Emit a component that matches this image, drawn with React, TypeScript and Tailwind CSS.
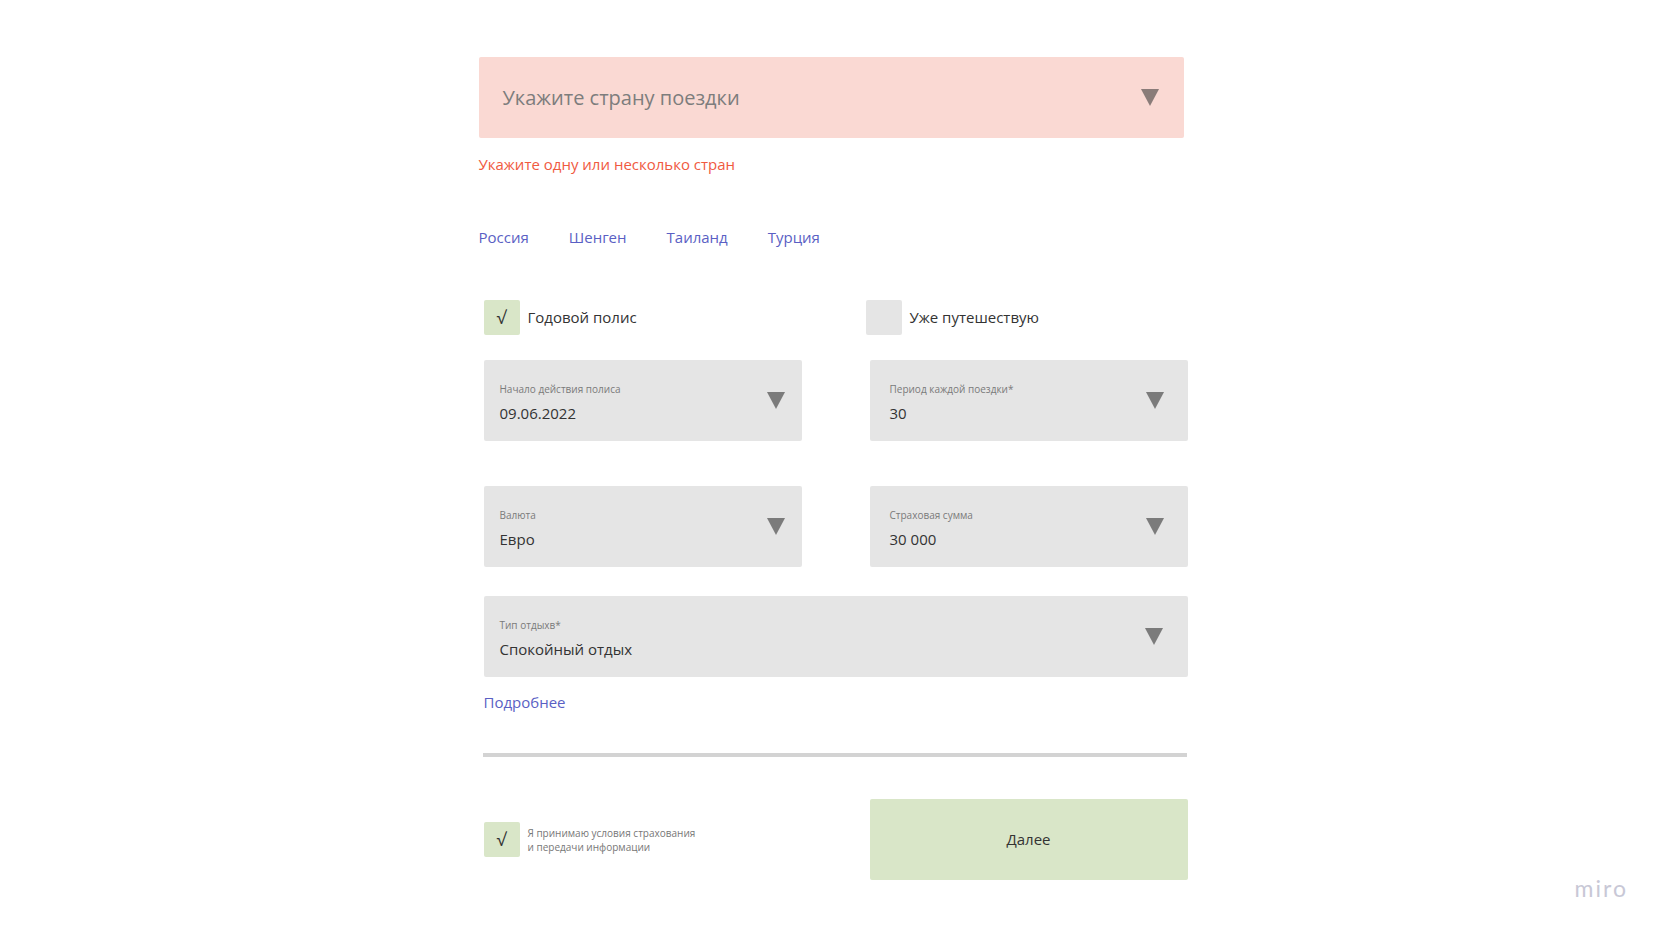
const Triangle = ({ color = "#7b7b7b" }: { color?: string }) => (
  <svg width="18" height="17" viewBox="0 0 18 17">
    <polygon points="0,0 18,0 9,17" fill={color} />
  </svg>
);

const Field = ({
  label,
  value,
  wide,
  right,
}: {
  label: string;
  value: string;
  wide?: boolean;
  right?: boolean;
}) => (
  <div
    className={`flex items-center justify-between h-[81px] bg-[#e5e5e5] rounded-[2px] ${
      wide ? "w-[704px] pl-4 pr-[25px]" : right ? "w-[318px] pl-[20px] pr-[24px]" : "w-[318px] pl-4 pr-[17px]"
    }`}
  >
    <div className="flex flex-col pt-[5px]">
      <span className="text-[10px] leading-[14px] text-[#7a7a7a]">{label}</span>
      <span className="text-[15px] leading-[22px] text-[#333] mt-[6px]">{value}</span>
    </div>
    <Triangle />
  </div>
);

export default function App() {
  const countries = ["Россия", "Шенген", "Таиланд", "Турция"];

  return (
    <div className="relative min-h-[937px] bg-white font-['Open_Sans',sans-serif]">
      <div className="mx-auto w-[709px] pt-[57px]">
        {/* страна */}
        <div className="flex items-center justify-between w-[705px] h-[81px] bg-[#fad9d3] rounded-[2px] pl-6 pr-[25px]">
          <span className="text-[20px] text-[#7d7d7d]">Укажите страну поездки</span>
          <Triangle color="#8a7c79" />
        </div>
        <p className="mt-[15px] text-[15px] leading-[22px] text-[#f05a3f]">
          Укажите одну или несколько стран
        </p>

        <div className="flex gap-[40px] mt-[51px] text-[15px] leading-[22px] text-[#5a5fc4]">
          {countries.map((c) => (
            <span key={c}>{c}</span>
          ))}
        </div>

        <div className="ml-[5px]">
          {/* чекбоксы */}
          <div className="flex mt-[52px] h-[35px]">
            <div className="flex items-center w-[382px]">
              <div className="w-[36px] h-[35px] bg-[#d9e6c8] rounded-[2px] flex items-center justify-center text-[18px] text-[#333]">
                √
              </div>
              <span className="ml-[8px] text-[15px] text-[#333]">Годовой полис</span>
            </div>
            <div className="flex items-center">
              <div className="w-[36px] h-[35px] bg-[#e5e5e5] rounded-[2px]" />
              <span className="ml-[8px] text-[15px] text-[#333]">Уже путешествую</span>
            </div>
          </div>

          {/* поля */}
          <div className="flex gap-[68px] mt-[25px]">
            <Field label="Начало действия полиса" value="09.06.2022" />
            <Field label="Период каждой поездки*" value="30" right />
          </div>
          <div className="flex gap-[68px] mt-[45px]">
            <Field label="Валюта" value="Евро" />
            <Field label="Страховая сумма" value="30 000" right />
          </div>
          <div className="mt-[29px]">
            <Field label="Тип отдыхв*" value="Спокойный отдых" wide />
          </div>

          <p className="mt-[14px] text-[15px] leading-[22px] text-[#5a5fc4]">Подробнее</p>

          <div className="mt-[40px] -ml-[1px] w-[704px] h-[4px] bg-[#d3d3d3]" />

          {/* низ */}
          <div className="flex items-center mt-[42px]">
            <div className="flex items-center w-[386px]">
              <div className="w-[36px] h-[35px] bg-[#d9e6c8] rounded-[2px] flex items-center justify-center text-[18px] text-[#333]">
                √
              </div>
              <div className="ml-[8px] text-[10px] leading-[14px] text-[#777]">
                <p>Я принимаю условия страхования</p>
                <p>и передачи информации</p>
              </div>
            </div>
            <button className="w-[318px] h-[81px] bg-[#d9e6c8] rounded-[2px] text-[15px] text-[#333]">
              Далее
            </button>
          </div>
        </div>
      </div>

      {/* miro watermark */}
      <span className="absolute right-[38px] top-[871px] text-[23px] tracking-[2px] text-[#c8c8d6] font-['Lato',sans-serif]">
        miro
      </span>
    </div>
  );
}
